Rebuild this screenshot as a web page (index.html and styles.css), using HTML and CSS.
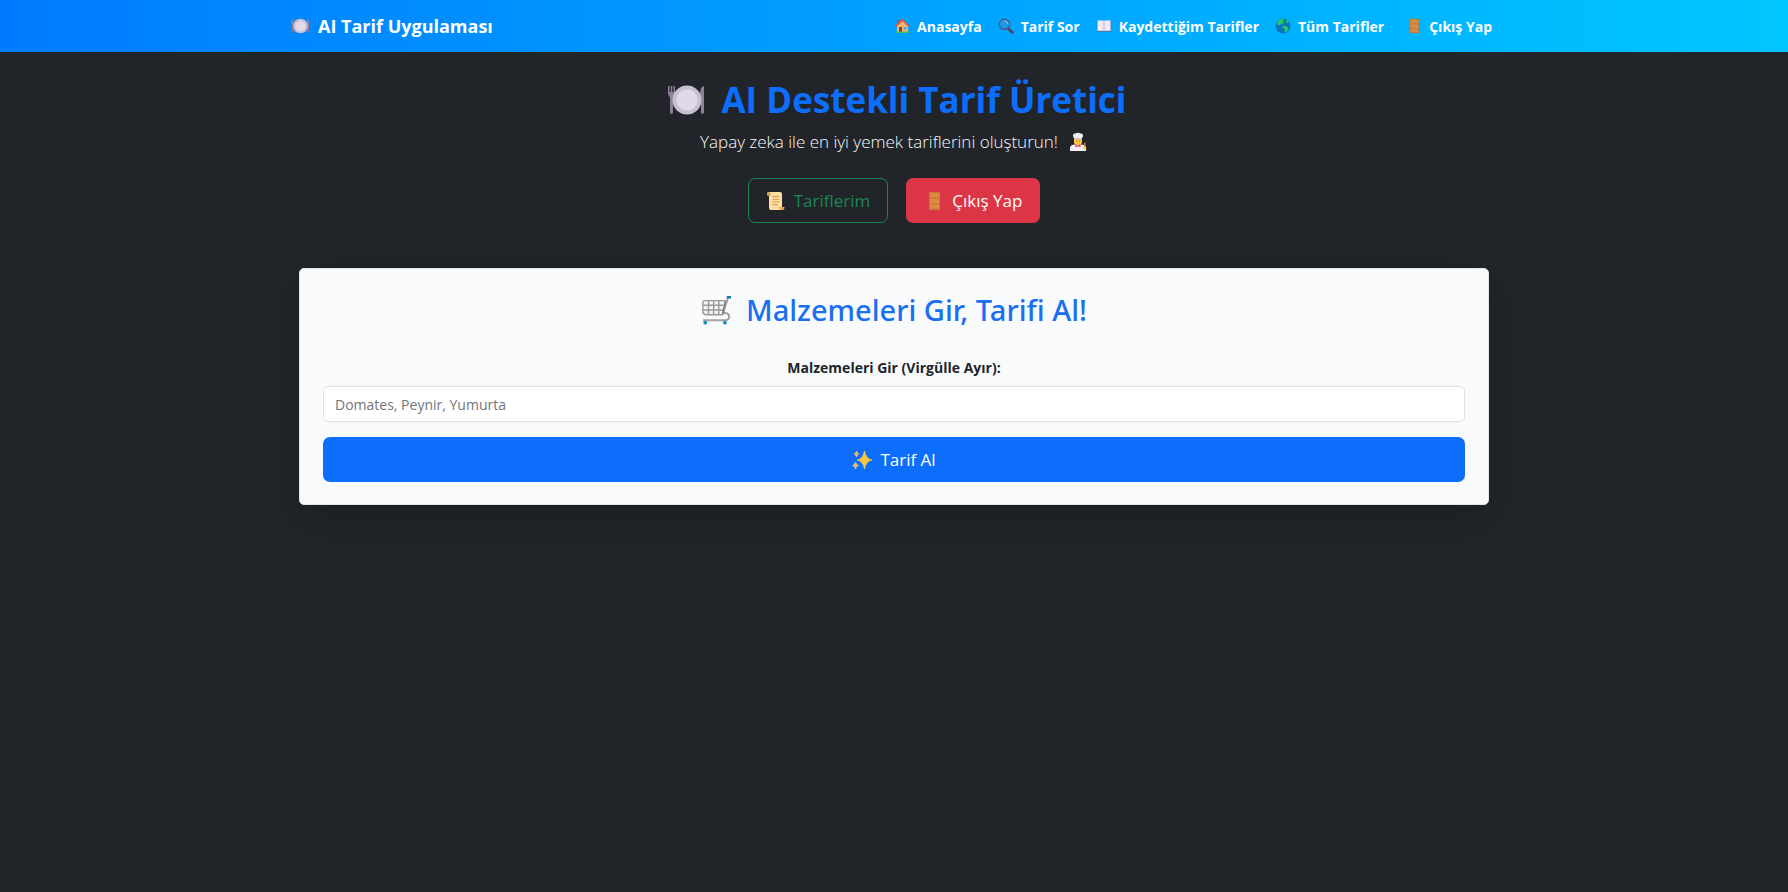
FILE: index.html
```html
<!DOCTYPE html>
<html lang="tr">
<head>
<meta charset="utf-8">
<title>AI Tarif Uygulaması</title>
<link rel="stylesheet" href="styles.css">
</head>
<body>
<svg class="defs" aria-hidden="true">
  <symbol id="plate" viewBox="0 0 38 32">
    <path d="M1 2v7q0 3 2 4v15q0 2 1.500 2t1.500-2V13q2-1 2-4V2H6.500v6H5.200V2H3.800v6H2.500V2z" fill="#8f8199"/>
    <path d="M37 2q-4 1-4 8v8h1v10q0 2 1.500 2t1.500-2z" fill="#8f8199"/>
    <circle cx="20" cy="16" r="14.500" fill="#cbbfd3"/>
    <circle cx="20" cy="16" r="10.500" fill="#e1d8ec"/>
  </symbol>
  <symbol id="home" viewBox="0 0 16 16">
    <path d="M3 2h2v5H3z" fill="#8d5a5a"/>
    <path d="M3 7.500 8.500 2 14 7.500V14H3z" fill="#f3b878"/>
    <path d="M5 9h3v5H5z" fill="#70483f"/><path d="M9.500 9h3v2.500h-3z" fill="#4aa5d8"/>
    <path d="M.8 8 8.500.6 15.600 8l-1.200 1-5.900-5.800L2 9.200z" fill="#dc5a45"/>
    <path d="M1 13.500h14.500V15H1z" fill="#4cb96b"/>
  </symbol>
  <symbol id="search" viewBox="0 0 16 16">
    <path d="m9.500 10 5 4.500" stroke="#51415d" stroke-width="2.600" stroke-linecap="round"/>
    <circle cx="6.500" cy="6.300" r="5.200" fill="#2397e4" stroke="#475b80" stroke-width="1.300"/>
    <path d="M7.500 3q2 .6 2.400 2.600" fill="none" stroke="#8ed1fa" stroke-linecap="round"/>
  </symbol>
  <symbol id="book" viewBox="0 0 16 16">
    <path d="M.8 3h14.400v11H.8z" fill="#5278a8"/>
    <path d="M1.500 2.500H7q1 0 1 .8 0-.8 1-.8h5.500v10.300H9q-1 0-1 .6 0-.6-1-.6H1.500z" fill="#f1eaf7"/>
    <path d="M8 3v10" stroke="#a59ebc" stroke-width=".8"/>
  </symbol>
  <symbol id="globe" viewBox="0 0 16 16">
    <circle cx="8" cy="8" r="7.400" fill="#0874bd"/>
    <path d="M3 2.700Q5 .7 8 .8l1.500 1.500L7.500 4l1.500.6-1.500 2L5 6.300 4 8 1.800 5.500z" fill="#28c76c"/>
    <path d="m8 7.700 3.400.5 2 1.800-1.300 3.400-2.200 1.300L9.500 11 7.300 9.300zM11 1.400l2.800 2.200-.8 2-2-1.600z" fill="#28c76c"/>
  </symbol>
  <symbol id="door" viewBox="0 0 20 20">
    <path d="M5 1h11v18H5z" fill="#ca7b31"/>
    <path d="M6.200 2.500h8.600v4H6.200zM6.200 8h8.600v4H6.200zM6.200 13.500h8.600v4H6.200z" fill="#d98d43"/>
    <circle cx="14" cy="11" r=".8" fill="#f4b64a"/>
  </symbol>
  <symbol id="chef" viewBox="0 0 20 20">
    <path d="M6 7h8v4l-2 3H8l-2-3z" fill="#ffc83d"/>
    <path d="M6 7V6q-1-.8-1-2.500Q5 1 7.500 1.600 10-.3 12.500 1.600 15 1 15 3.500 15 5.200 14 6v1z" fill="#f1edf4"/>
    <path d="M6 6.300h8v1.200H6z" fill="#c3b8ce"/>
    <path d="M2 19v-3q0-3 4-3.500l4 1 4-1q4 .5 4 3.500v3z" fill="#f4eff8"/>
    <path d="m7.500 12.300 2.500 1.200 2.500-1.200v3L10 14.200l-2.500 1.100z" fill="#e63950"/>
    <path d="M16.800 10.500v4" stroke="#d98d43" stroke-width="1.300"/><circle cx="16.800" cy="16" r="1.600" fill="#ffc83d"/>
    <path d="M8.500 9h.8M11 9h.8" stroke="#704b32"/>
  </symbol>
  <symbol id="scroll" viewBox="0 0 20 20">
    <path d="M1 3q0-2 2-2h11q2 0 2 2v13H5q-2 0-2-2V5Q1 5 1 3z" fill="#ffdda2"/>
    <path d="M1 3q0-2 2-2 1.500.3 1.500 2V5H3Q1 5 1 3z" fill="#d99a4f"/>
    <path d="M5 16h13.500v1q0 2-2 2H6q2-1 2-2" fill="#e5a65b"/>
    <path d="M3 13v4q0 2 2 2h10q-2-1-2-3H6z" fill="#ffdda2"/>
    <path d="M6.500 5.500h7M6.500 8.300h7M6.500 11h7M6.500 13.600h5" stroke="#d69b57" stroke-width="1.100"/>
  </symbol>
  <symbol id="cart" viewBox="0 0 32 32">
    <path d="M4 6h22l-3 15H6q-2 0-2.500-4L2 9q0-3 2-3z" fill="#f4f4f5"/>
    <path d="M2 11h22M2 16h22M8 6v15M13.500 6v15M19 6v15M4 6h22M6 21h17M4 6Q1.500 6 2 9v9q.3 3 4 3" fill="none" stroke="#999" stroke-width="1.500"/>
    <path d="m29 2-5.500 17.500q6-1 6.500 3 .3 4.500-4.500 4.500H2" fill="none" stroke="#a3a3a3" stroke-width="2.200"/>
    <path d="M26 6l-3 15" stroke="#777" stroke-width="1.500"/>
    <path d="M27.500 1H32v2.800h-4.500z" fill="#147fad"/>
    <circle cx="4.500" cy="29.500" r="2" fill="#168cbc"/><circle cx="25.500" cy="29.500" r="2" fill="#168cbc"/>
  </symbol>
  <symbol id="sparkles" viewBox="0 0 20 20">
    <path d="M12.500 1Q13.800 8.700 19.800 10q-6 1.300-7.300 9-1.300-7.700-7.300-9 6-1.300 7.300-9z" fill="#f8c444" stroke="#f8c444" stroke-width=".8"/>
    <path d="M4.500 1Q5 3.700 7 4 5 4.300 4.500 7 4 4.300 2 4 4 3.700 4.500 1zM3.500 12Q4 15 6.500 15.500 4 16 3.500 19 3 16 .5 15.500 3 15 3.500 12z" fill="#e3bd76" stroke="#e3bd76" stroke-width=".8"/>
  </symbol>
</svg>

<header class="navbar">
  <div class="navbar-inner">
    <a class="brand" href="#"><svg class="icon-plate-sm"><use href="#plate"/></svg>AI Tarif Uygulaması</a>
    <nav class="nav">
      <a class="nav-link" href="#"><svg class="icon-sm"><use href="#home"/></svg>Anasayfa</a>
      <a class="nav-link" href="#"><svg class="icon-sm"><use href="#search"/></svg>Tarif Sor</a>
      <a class="nav-link" href="#"><svg class="icon-sm"><use href="#book"/></svg>Kaydettiğim Tarifler</a>
      <a class="nav-link" href="#"><svg class="icon-sm"><use href="#globe"/></svg>Tüm Tarifler</a>
      <a class="nav-link nav-logout" href="#"><svg class="icon-sm"><use href="#door"/></svg>Çıkış Yap</a>
    </nav>
  </div>
</header>

<main class="container">
  <section class="hero">
    <h1 class="title"><svg class="icon-plate-lg"><use href="#plate"/></svg>AI Destekli Tarif Üretici</h1>
    <p class="lead">Yapay zeka ile en iyi yemek tariflerini oluşturun!<svg class="icon-md"><use href="#chef"/></svg></p>
    <div class="actions">
      <a class="btn btn-outline" href="#"><svg class="icon-md"><use href="#scroll"/></svg>Tariflerim</a>
      <a class="btn btn-danger" href="#"><svg class="icon-md"><use href="#door"/></svg>Çıkış Yap</a>
    </div>
  </section>

  <section class="card">
    <h2 class="card-title"><svg class="icon-cart"><use href="#cart"/></svg>Malzemeleri Gir, Tarifi Al!</h2>
    <form class="form">
      <label class="label" for="ingredients">Malzemeleri Gir (Virgülle Ayır):</label>
      <input class="input" id="ingredients" type="text" placeholder="Domates, Peynir, Yumurta">
      <button class="btn btn-primary" type="button"><svg class="icon-md"><use href="#sparkles"/></svg>Tarif Al</button>
    </form>
  </section>
</main>
</body>
</html>
```
FILE: styles.css
```css
* { box-sizing: border-box; }
body {
  margin: 0;
  min-height: 100vh;
  background: #212529;
  color: #f8f9fa;
  font-family: "Segoe UI", "Open Sans", "Noto Sans", sans-serif;
  font-size: 14px;
}
a { color: inherit; text-decoration: none; }
svg { display: block; flex: none; }
.defs { position: absolute; width: 0; height: 0; }

.icon-sm { width: 16px; height: 16px; }
.icon-md { width: 20px; height: 20px; }
.icon-plate-sm { width: 20px; height: 16px; }
.icon-plate-lg { width: 38px; height: 32px; }
.icon-cart { width: 30px; height: 30px; }

.navbar { background: linear-gradient(to right, #007bff, #00c6ff); color: #fff; }
.navbar-inner {
  display: flex;
  align-items: center;
  justify-content: space-between;
  max-width: 1208px;
  min-height: 52px;
  margin: 0 auto;
}
.brand {
  display: flex;
  align-items: center;
  gap: 8px;
  font-size: 18px;
  font-weight: 700;
}
.nav { display: flex; align-items: center; }
.nav-link {
  display: flex;
  align-items: center;
  gap: 7px;
  padding: 8px;
  font-size: 14px;
  font-weight: 700;
}
.nav-logout { margin-left: 6px; padding-right: 6px; }

.container { max-width: 1190px; margin: 0 auto; }
.hero {
  display: flex;
  flex-direction: column;
  align-items: center;
  padding: 24px 0 45px;
}
.title {
  display: flex;
  align-items: center;
  gap: 16px;
  margin: 0;
  padding-left: 6px;
  color: #0d6efd;
  font-size: 35px;
  font-weight: 700;
  line-height: 48px;
}
.lead {
  display: flex;
  align-items: center;
  gap: 10px;
  margin: 4px 0 22px;
  font-size: 17px;
  font-weight: 300;
  line-height: 28px;
}
.actions { display: flex; gap: 18px; }
.btn {
  display: flex;
  align-items: center;
  justify-content: center;
  gap: 8px;
  min-height: 45px;
  padding: 0 17px;
  border: 1px solid transparent;
  border-radius: 7px;
  font-family: inherit;
  font-size: 17px;
  font-weight: 400;
}
.btn-outline { border-color: #198754; color: #198754; }
.btn-danger { background: #dc3545; color: #fff; }
.btn-primary { width: 100%; background: #0d6efd; color: #fff; }

.card {
  padding: 21px 23px 22px;
  border: 1px solid #e3e5e8;
  border-radius: 5px;
  background: #f8fafc;
  box-shadow: 0 14px 43px rgba(0, 0, 0, 0.18);
}
.card-title {
  display: flex;
  align-items: center;
  justify-content: center;
  gap: 15px;
  margin: 0 0 27px;
  color: #1a6ff0;
  font-family: "Segoe UI", "Noto Sans", "Open Sans", sans-serif;
  font-size: 29px;
  font-weight: 500;
  line-height: 40px;
}
.form { display: flex; flex-direction: column; }
.label {
  margin-bottom: 7px;
  color: #212529;
  font-size: 14px;
  font-weight: 700;
  line-height: 22px;
  text-align: center;
}
.input {
  width: 100%;
  height: 36px;
  margin-bottom: 15px;
  padding: 0 11px;
  border: 1px solid #dee2e6;
  border-radius: 5px;
  background: #fff;
  color: #212529;
  font-family: inherit;
  font-size: 14px;
}
.input::placeholder { color: #70767c; opacity: 1; }
```
